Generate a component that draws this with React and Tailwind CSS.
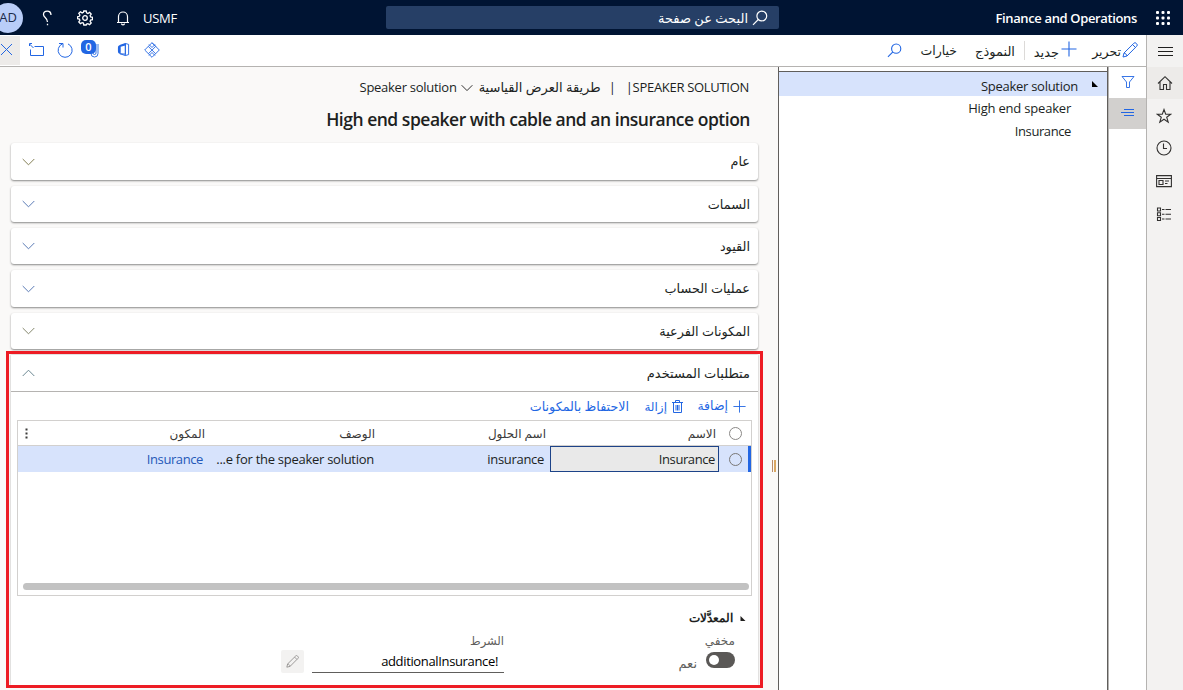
import React from "react";

function Svg({ className, children, box = "0 0 16 16", sw = 1 }) {
  return (
    <svg className={"shrink-0 " + className} viewBox={box} fill="none" stroke="currentColor" strokeWidth={sw}>
      {children}
    </svg>
  );
}

const Search = ({ className }) => (
  <Svg className={className} sw={1.2}>
    <circle cx="9.8" cy="6" r="4.9" />
    <path d="M6.300 9.500 1 14.800" />
  </Svg>
);
const Pencil = ({ className }) => (
  <Svg className={className} sw={1}>
    <path d="M1 15l1-4L11.700 1.400a1.700 1.700 0 0 1 2.600 0l.3.3a1.700 1.700 0 0 1 0 2.600L5 14zM10.600 2.600l2.800 2.800M2 11c1.400.2 2.700 1.500 3 3" />
  </Svg>
);
const Plus = ({ className }) => (
  <Svg className={className} sw={1.1}>
    <path d="M8 .5v15M.5 8h15" />
  </Svg>
);
const Chevron = ({ className, up }) => (
  <Svg className={className} box="0 0 13 8" sw={1}>
    <path d={up ? "M.7 7 6.500 1.200 12.300 7" : "M.7 1 6.500 6.800 12.300 1"} />
  </Svg>
);
const Corner = ({ className }) => (
  <Svg className={className} box="0 0 6 6">
    <path d="M0 0v6h6z" fill="currentColor" stroke="none" />
  </Svg>
);

function TopBar() {
  return (
    <header className="flex h-[35px] shrink-0 items-center bg-[#001433] pr-[13px] text-white">
      <Svg className="h-[14px] w-[14px]" box="0 0 14 14">
        <g fill="currentColor" stroke="none">
          {[0, 5.5, 11].map((y) => [0, 5.5, 11].map((x) => <rect key={x + "-" + y} x={x} y={y} width="3" height="3" rx="1" />))}
        </g>
      </Svg>
      <div className="mr-[19px] w-[358px] shrink-0 pt-[2px] text-[13px] font-semibold tracking-[-0.36px]">
        <span dir="ltr">Finance and Operations</span>
      </div>
      <div className="flex h-[23px] w-[393px] shrink-0 items-center rounded-[2px] bg-[#263f66] pr-[11px]">
        <Search className="h-[16px] w-[16px]" />
        <span className="mr-[4px] pt-[2px] text-[13px]">البحث عن صفحة</span>
      </div>
      <div className="mr-[209px] w-[34px] shrink-0 pt-[2px] text-[13px] tracking-[-0.25px]">
        <span dir="ltr">USMF</span>
      </div>
      <Svg className="mr-[12px] h-[16px] w-[16px]" sw={1.2}>
        <path d="M2 12.500h12M3.500 12.500V6.500a4.500 4.500 0 0 1 9 0v6M6.500 13.500a1.500 1.300 0 0 0 3 0" />
      </Svg>
      <Svg className="mr-[22px] h-[16px] w-[16px]" sw={1.3}>
        <path d="M6.800 1h2.400l.4 1.900 1.300.6 1.700-1.100 1.600 1.700-1.100 1.600.5 1.300 1.900.4v2.200l-1.900.4-.5 1.400 1.100 1.600-1.600 1.600-1.700-1-1.300.5L9.200 15H6.800l-.4-1.900-1.300-.5-1.700 1-1.600-1.600 1.100-1.600L2.400 9 .6 8.600V6.700l1.800-.4L2.900 5 1.800 3.400l1.600-1.600 1.700 1.100 1.300-.6z" />
        <circle cx="8" cy="8" r="2.300" />
      </Svg>
      <Svg className="mr-[24px] h-[16px] w-[12px]" box="0 0 12 16" sw={1.300}>
        <path d="M10 5C10 2.500 8.500 1.200 6.200 1.200S2.500 2.500 2.500 4.500C2.500 7.500 6.500 7.500 6.500 12M6.500 13.700v1.500" />
      </Svg>
      <div className="mr-[18px] -ml-[4px] flex h-[30px] w-[30px] shrink-0 items-center justify-center rounded-full bg-[#b9cdf8] pt-px text-[13px] text-[#1b2a4a]">
        AD
      </div>
    </header>
  );
}

function CommandBar() {
  return (
    <div className="flex h-[32px] shrink-0 border-b border-[#b5b3b1] bg-white pr-[8px] text-[13px] text-[#201f1e]">
      <Pencil className="mt-[7px] h-[16px] w-[16px] text-[#2266e3]" />
      <span className="mr-px w-[30px] pt-[8px] text-[12.500px] whitespace-nowrap">تحرير</span>
      <Plus className="mt-[6px] mr-[14px] h-[16px] w-[16px] text-[#2266e3]" />
      <span className="mr-[2px] w-[27px] pt-[8px] whitespace-nowrap">جديد</span>
      <span className="mt-[6px] mr-[7px] h-[19px] w-px bg-[#dcdad8]" />
      <span className="mr-[9px] w-[41px] pt-[7px] whitespace-nowrap">النموذج</span>
      <span className="mr-[17px] w-[36px] pt-[7px] text-[12.500px] whitespace-nowrap">خيارات</span>
      <Search className="mt-[8px] mr-[19px] h-[15px] w-[15px] text-[#2266e3]" />
      <div className="flex flex-1 justify-end text-[#2266e3]">
        <Svg className="mt-[7px] h-[16px] w-[16px]" sw={0.9}>
          <path d="M8 .7 15.300 8 8 15.300.7 8zM4.300 4.400 11.600 11.700M11.700 4.400 4.400 11.700M8 .7l3.700 3.700M5 2.500 8 5.500l3-3M5 13.500l3-3 3 3" />
        </Svg>
        <Svg className="mt-[7px] mr-[14px] h-[15px] w-[13px]" box="0 0 14 16" sw={1}>
          <path d="M9 1.500 12.500 2.500v11L9 14.500 3 12.500l6 .5zM9 1.500v13" />
          <path d="M9 1 3.500 3C1.500 4 1 4.500 1 6v4c0 1.300.5 2 1.500 2.500L4 11.500V5l5-1.300z" fill="currentColor" stroke="none" />
        </Svg>
        <div className="relative mt-[5px] mr-[18px] h-[20px] w-[18px]">
          <Svg className="absolute top-[2px] left-[9px] h-[16px] w-[9px]" box="0 0 9 16" sw={0.9}>
            <path d="M8 2v9.500a3.500 3.500 0 0 1-7 0V8M6 2v9a1.500 1.500 0 0 1-3 0V4" />
          </Svg>
          <span className="absolute top-0 left-0 flex h-[14px] w-[15px] items-center justify-center rounded-[5px] bg-[#2266e3] text-[11px] font-semibold text-white">
            0
          </span>
        </div>
        <Svg className="mt-[7px] mr-[8px] h-[16px] w-[16px]" sw={1}>
          <path d="M5.500 1.800a7 7 0 1 0 5.500.1M2 1.500h4v4" />
        </Svg>
        <Svg className="mt-[7px] mr-[13px] h-[16px] w-[15px]" box="0 0 15 16" sw={1}>
          <path d="M5.500 4.500h9v9h-13V7.500M.5 2l4 4M.5 4v-2.500h2.500" />
        </Svg>
        <div className="mt-px mr-[9px] flex h-[29px] w-[20px] items-center bg-[#edebe9] text-[#2266e3]">
          <Svg className="mr-[7px] mb-[2px] h-[13px] w-[13px]" box="0 0 13 13" sw={1}>
            <path d="M1 1l11 11M12 1 1 12" />
          </Svg>
        </div>
      </div>
    </div>
  );
}

function NavRail() {
  return (
    <nav className="flex w-[37px] shrink-0 flex-col items-center border-l border-[#b5b3b1] bg-[#f3f2f1] text-[#323130]">
      <div className="flex h-[32px] w-full items-center justify-center text-[#201f1e]">
        <Svg className="h-[11px] w-[15px]" box="0 0 15 11" sw={1.2}>
          <path d="M0 1.500h15M0 5.500h15M0 9.500h15" />
        </Svg>
      </div>
      <div className="flex h-[32px] w-full items-center justify-center bg-[#edebe9] pl-px">
        <Svg className="mr-px h-[16px] w-[16px]" sw={1.1}>
          <path d="M1 8.500 8 1.700l7 6.800M3 7v7.500h3.500v-5h3v5H13V7" />
        </Svg>
      </div>
      <div className="mr-[2px] flex flex-col items-center">
        <Svg className="mt-[9px] h-[16px] w-[16px]" sw={1.1}>
          <path d="m8 1.500 1.700 4.700h5l-4 3 1.500 4.900L8 11.200l-4.200 2.900L5.300 9.200l-4-3h5z" />
        </Svg>
        <Svg className="mt-[16px] h-[16px] w-[16px]" sw={1.1}>
          <circle cx="8" cy="8" r="7" />
          <path d="M7.500 3.500v5H11" />
        </Svg>
        <Svg className="mt-[17px] h-[16px] w-[16px]" sw={1.1}>
          <path d="M.6 2.600h14.800v11H.6zM.6 5.500h14.800M3 7.500h4v4H3zM9 8h4M9 10.500h2.500" />
        </Svg>
        <Svg className="mt-[17px] h-[16px] w-[16px]" sw={1.1}>
          <path d="M1.500 2h3v3h-3zM1.500 6.800h3v3h-3zM1.500 11.500h3v3h-3zM6 3.500h2.500M9.500 3.500h5.500M6 8.300h2.500M9.500 8.300h5.500M6 13h2.500M9.500 13h5.500" />
        </Svg>
      </div>
    </nav>
  );
}

function TreeTools() {
  return (
    <div className="flex w-[38px] shrink-0 flex-col border-l border-[#b5b3b1] bg-white text-[#2266e3]">
      <div className="flex h-[31px] items-center justify-center pb-px">
        <Svg className="h-[12px] w-[14px]" box="0 0 14 12" sw={0.9}>
          <path d="M1 .5h12L8.500 6v5.500h-3V6z" />
        </Svg>
      </div>
      <div className="flex h-[31px] items-center justify-center bg-[#d2d0ce] pb-[3px]">
        <Svg className="h-[9px] w-[13px]" box="0 0 13 9" sw={1}>
          <path d="M3 1.500h10M0 4.500h13M3 7.500h10" />
        </Svg>
      </div>
    </div>
  );
}

function TreePane() {
  return (
    <div className="flex w-[330px] shrink-0 flex-col border-r border-l border-[#605e5c] pt-[4px] text-[13px] leading-[23px] text-[#201f1e]">
      <div className="flex h-[25px] items-center border-t border-[#605e5c] bg-[#d7e3fc] pr-[9px]">
        <Corner className="h-[6px] w-[6px] text-black" />
        <span dir="ltr" className="mr-[14px] pt-[4px] tracking-[-0.27px]">Speaker solution</span>
      </div>
      <div className="h-[23px] pt-px pr-[36px]">
        <span dir="ltr" className="tracking-[-0.2px]">High end speaker</span>
      </div>
      <div className="h-[23px] pt-px pr-[36px]">
        <span dir="ltr" className="tracking-[-0.4px]">Insurance</span>
      </div>
    </div>
  );
}

function Card({ title, color, className }) {
  return (
    <section className={"flex shrink-0 items-center rounded-[3px] bg-white pr-[8px] pl-[11px] shadow-[0_1px_2px_rgba(0,0,0,0.45)] " + className}>
      <h2 className="pt-px text-[12.800px]">{title}</h2>
      <Chevron className={"mr-auto h-[8px] w-[13px] " + color} />
    </section>
  );
}

function Grid() {
  return (
    <div className="flex h-[176px] shrink-0 flex-col border border-[#d2d0ce] text-[12px]">
      <div className="flex h-[25px] items-center border-b border-[#d2d0ce] text-[#3b3a39]">
        <span className="mr-[9px] h-[13px] w-[13px] rounded-full border border-[#8a8886]" />
        <span className="mr-[13px] w-[170px] pt-[2px]">الاسم</span>
        <span className="w-[171px] pt-[2px]">اسم الحلول</span>
        <span className="w-[170px] pt-[2px]">الوصف</span>
        <span className="flex-1 pt-[2px]">المكون</span>
        <Svg className="ml-[7px] h-[11px] w-[3px]" box="0 0 3 11">
          <path d="M.5.500h2v2h-2zM.5 4.500h2v2h-2zM.5 8.500h2v2h-2z" fill="currentColor" stroke="none" />
        </Svg>
      </div>
      <div className="flex h-[26px] items-center bg-[#d7e3fc] text-[13px] text-[#201f1e]">
        <span className="h-full w-[3px] bg-[#2266e3]" />
        <span className="mr-[6px] h-[13px] w-[13px] rounded-full border-[1.5px] border-[#797775]" />
        <span className="mr-[10px] flex h-[26px] w-[169px] items-center border border-[#1d4388] bg-[#e9e9e9] pt-[2px] pr-[3px] tracking-[-0.4px]">
          <bdi>Insurance</bdi>
        </span>
        <span className="mr-[6px] w-[170px] pt-[2px] tracking-[-0.3px]">
          <bdi>insurance</bdi>
        </span>
        <span dir="ltr" className="w-[171px] pt-[2px] text-right tracking-[-0.27px] whitespace-nowrap">
          ...e for the speaker solution
        </span>
        <span className="pt-[2px] tracking-[-0.4px] text-[#2458b8]">
          <bdi>Insurance</bdi>
        </span>
      </div>
      <div className="mt-auto mr-[2px] mb-[5px] ml-[5px] h-[7px] rounded-full bg-[#c2c2c2]" />
    </div>
  );
}

function Requirements() {
  return (
    <section className="relative mt-[6px] flex h-[330px] shrink-0 flex-col bg-white shadow-[0_0_2px_rgba(0,0,0,0.3)]">
      <div className="flex h-[37px] shrink-0 items-center border-b border-[#b5b3b1] pr-[8px] pl-[11px]">
        <h2 className="pt-[2px] text-[13px]">متطلبات المستخدم</h2>
        <Chevron up className="mr-auto h-[8px] w-[13px] text-[#6b8791]" />
      </div>
      <div className="flex h-[28px] shrink-0 items-center pr-[12px] text-[12.500px] text-[#2266e3]">
        <Plus className="h-[13px] w-[13px]" />
        <span className="mr-[5px] w-[32px] pt-px whitespace-nowrap">إضافة</span>
        <Svg className="mr-[13px] h-[13px] w-[11px]" box="0 0 11 13">
          <path d="M0 2.500h11M3.500 2V.5h4V2M1.500 2.500v10h8v-10M4 5v5.500M5.500 5v5.500M7 5v5.500" />
        </Svg>
        <span className="mr-[5px] w-[22px] pt-px text-[12px] whitespace-nowrap">إزالة</span>
        <span className="mr-[16px] pt-px text-[12.700px] whitespace-nowrap">الاحتفاظ بالمكونات</span>
      </div>
      <div className="mr-[6px] ml-[6px] flex flex-col">
        <Grid />
        <div className="mt-[13px] flex h-[18px] items-center pr-[6px] text-[12px]">
          <Corner className="h-[5px] w-[6px]" />
          <h3 className="mr-[7px] font-['Open_Sans'] font-bold">المعدَّلات</h3>
        </div>
        <div className="mt-[5px] flex text-[12px] text-[#605e5c]">
          <div className="w-[231px] pr-[17px]">
            <div className="h-[18px] leading-[18px]">مخفي</div>
            <div className="flex h-[20px] items-center">
              <span className="flex h-[16px] w-[29px] items-center justify-end rounded-full bg-[#5a5856] pl-[3px]">
                <span className="h-[10px] w-[10px] rounded-full bg-white" />
              </span>
              <span className="mr-[9px] pt-[8px] text-[13px]">نعم</span>
            </div>
          </div>
          <div className="mr-[17px] w-[192px]">
            <div className="h-[18px] text-[11.500px] leading-[18px]">الشرط</div>
            <div dir="ltr" className="h-[23px] border-b border-[#605e5c] pr-[6px] text-right text-[13px] leading-[22px] tracking-[-0.35px] text-black">
              additionalInsurance!
            </div>
          </div>
          <div className="mt-[18px] mr-[8px] flex h-[23px] w-[23px] items-center justify-center rounded-[2px] bg-[#f3f2f1] text-[#8a8886]">
            <Pencil className="h-[13px] w-[13px]" />
          </div>
        </div>
      </div>
      <div className="pointer-events-none absolute -top-[4px] -right-[5px] h-[337px] w-[757px] border-[3px] border-[#ed1c24]" />
    </section>
  );
}

function Main() {
  return (
    <main className="flex w-[778px] flex-col bg-[#faf9f8] pr-[20px] pl-[11px] text-[#201f1e]">
      <div className="mt-[10px] flex h-[22px] items-center pr-[9px] text-[13px]">
        <span dir="ltr" className="tracking-[-0.300px] whitespace-nowrap">|SPEAKER SOLUTION</span>
        <span className="mr-[10px]">|</span>
        <span className="mr-[8px] w-[124px] whitespace-nowrap">طريقة العرض القياسية</span>
        <Chevron className="mr-[4px] h-[8px] w-[12px]" />
        <span dir="ltr" className="mr-[4px] tracking-[-0.27px]">Speaker solution</span>
      </div>
      <h1 dir="ltr" className="mt-[6px] h-[28px] pr-[8px] text-right text-[17.500px] leading-[28px] font-semibold tracking-[-0.48px] whitespace-nowrap">
        High end speaker with cable and an insurance option
      </h1>
      <div className="mt-[10px] flex flex-col">
        <Card title="عام" color="text-[#847f55]" className="h-[37px]" />
        <Card title="السمات" color="text-[#5a7bb5]" className="mt-[6px] h-[36px]" />
        <Card title="القيود" color="text-[#5a7bb5]" className="mt-[6px] h-[36px]" />
        <Card title="عمليات الحساب" color="text-[#5a7bb5]" className="mt-[6px] h-[37px]" />
        <Card title="المكونات الفرعية" color="text-[#84866b]" className="mt-[6px] h-[36px]" />
        <Requirements />
      </div>
    </main>
  );
}

export default function App() {
  return (
    <div dir="rtl" className="flex h-[690px] w-[1183px] flex-col overflow-hidden bg-white font-['Open_Sans','DejaVu_Sans',sans-serif]">
      <TopBar />
      <div className="flex min-h-0 flex-1">
        <NavRail />
        <div className="flex min-w-0 flex-1 flex-col">
          <CommandBar />
          <div className="flex min-h-0 flex-1">
            <TreeTools />
            <TreePane />
            <div className="relative flex">
              <Main />
              <div className="absolute top-[393px] right-[2px] flex h-[12px] gap-px">
                <span className="w-[2px] bg-[#d9a763]" />
                <span className="w-[1px] bg-[#b98b68]" />
              </div>
            </div>
          </div>
        </div>
      </div>
    </div>
  );
}
